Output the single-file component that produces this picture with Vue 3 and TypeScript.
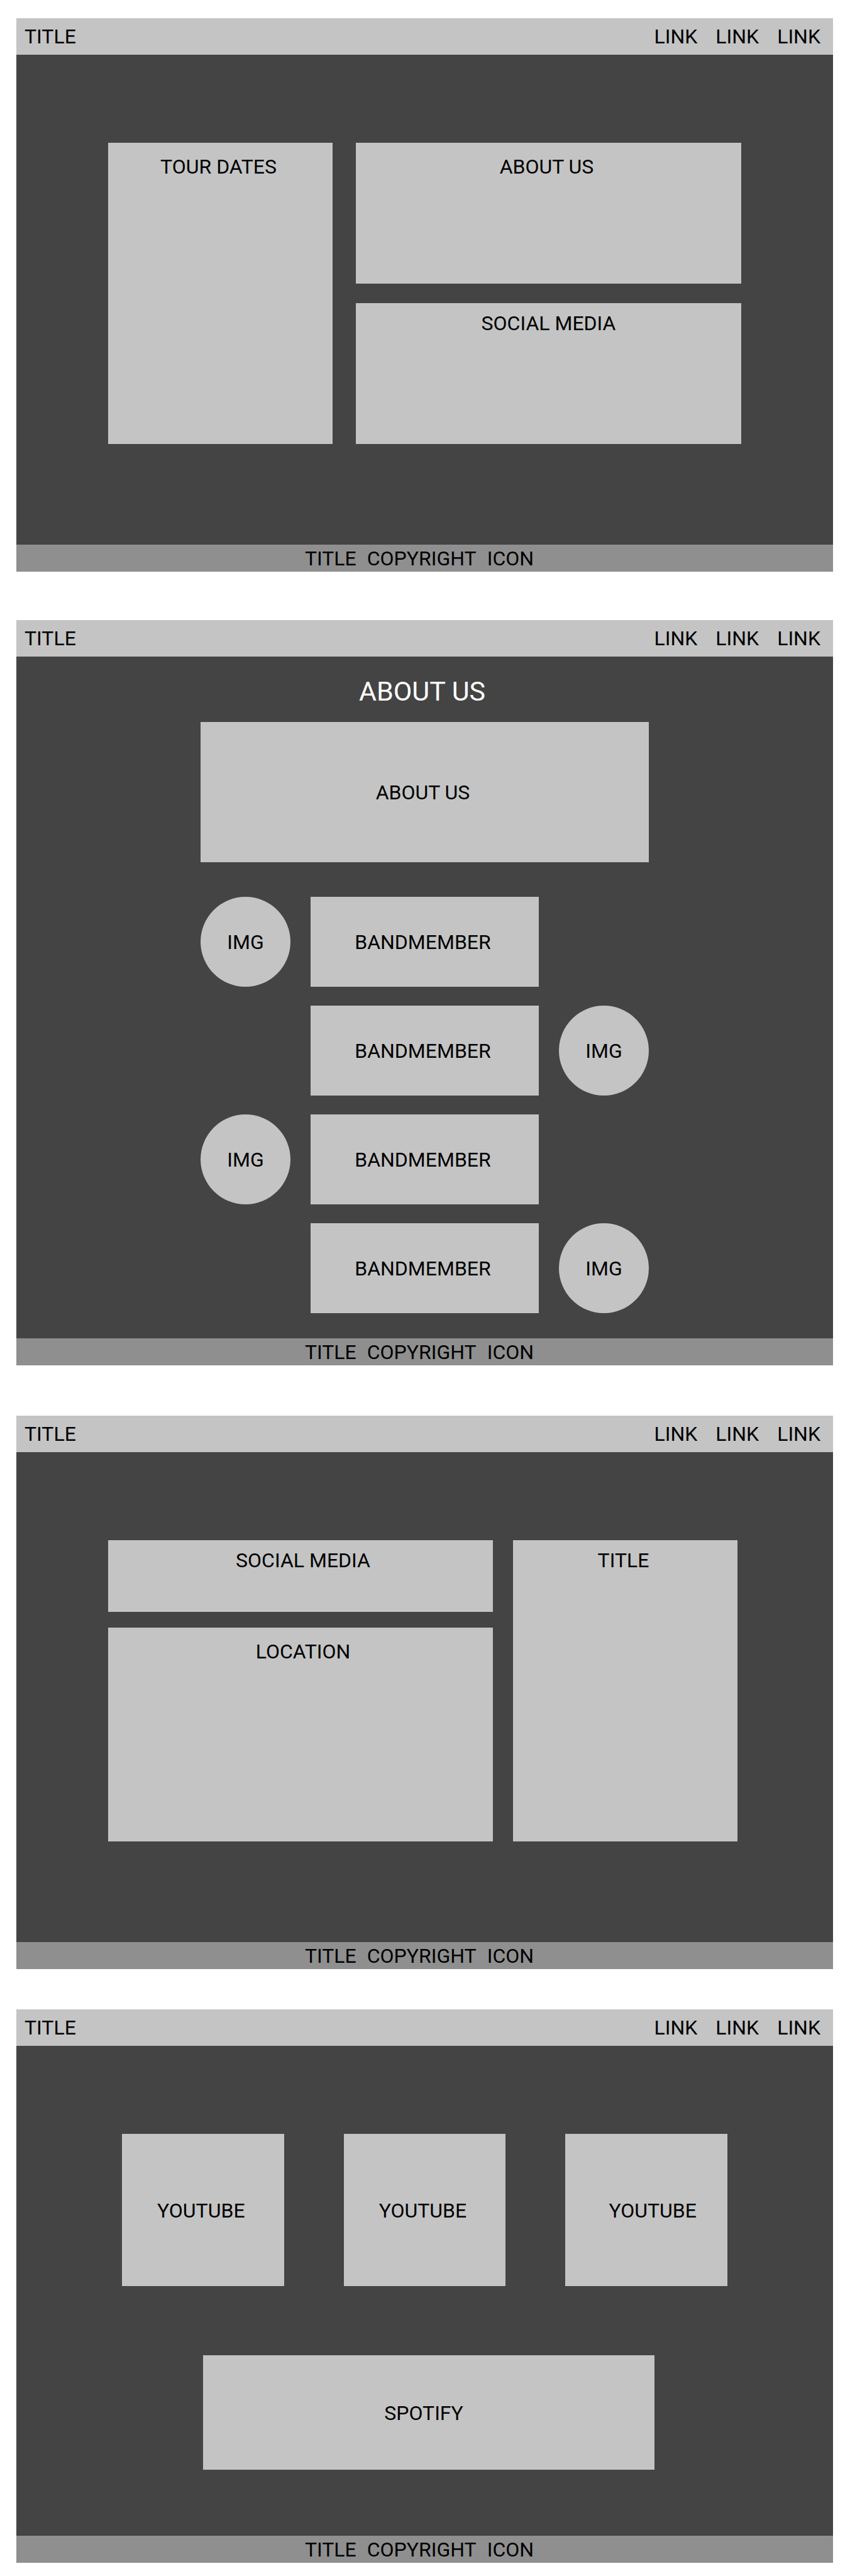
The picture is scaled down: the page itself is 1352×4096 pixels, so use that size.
<script setup lang="ts">
interface Member {
  id: number
  side: 'left' | 'right'
}

const links: string[] = ['LINK', 'LINK', 'LINK']
const footerItems: string[] = ['TITLE', 'COPYRIGHT', 'ICON']

const members: Member[] = [
  { id: 1, side: 'left' },
  { id: 2, side: 'right' },
  { id: 3, side: 'left' },
  { id: 4, side: 'right' },
]
</script>

<template>
  <div class="board">
    <!-- Home -->
    <section class="screen screen-home">
      <header class="bar">
        <span>TITLE</span>
        <nav class="links">
          <a v-for="(link, i) in links" :key="i" href="#">{{ link }}</a>
        </nav>
      </header>
      <main class="body home">
        <article class="card roomy">TOUR DATES</article>
        <div class="stack">
          <article class="card roomy">ABOUT US</article>
          <article class="card even">SOCIAL MEDIA</article>
        </div>
      </main>
      <footer class="foot">
        <span v-for="item in footerItems" :key="item">{{ item }}</span>
      </footer>
    </section>

    <!-- About -->
    <section class="screen screen-about">
      <header class="bar">
        <span>TITLE</span>
        <nav class="links">
          <a v-for="(link, i) in links" :key="i" href="#">{{ link }}</a>
        </nav>
      </header>
      <main class="body about">
        <h1 class="heading">ABOUT US</h1>
        <article class="card middle intro">ABOUT US</article>
        <ul class="members">
          <li v-for="member in members" :key="member.id" class="member" :class="member.side">
            <div class="avatar">IMG</div>
            <div class="card middle name">BANDMEMBER</div>
          </li>
        </ul>
      </main>
      <footer class="foot">
        <span v-for="item in footerItems" :key="item">{{ item }}</span>
      </footer>
    </section>

    <!-- Contact -->
    <section class="screen screen-contact">
      <header class="bar">
        <span>TITLE</span>
        <nav class="links">
          <a v-for="(link, i) in links" :key="i" href="#">{{ link }}</a>
        </nav>
      </header>
      <main class="body contact">
        <div class="stack">
          <article class="card lead">SOCIAL MEDIA</article>
          <article class="card roomy lead">LOCATION</article>
        </div>
        <article class="card">TITLE</article>
      </main>
      <footer class="foot">
        <span v-for="item in footerItems" :key="item">{{ item }}</span>
      </footer>
    </section>

    <!-- Media -->
    <section class="screen screen-media">
      <header class="bar">
        <span>TITLE</span>
        <nav class="links">
          <a v-for="(link, i) in links" :key="i" href="#">{{ link }}</a>
        </nav>
      </header>
      <main class="body media">
        <div class="videos">
          <article class="card middle">YOUTUBE</article>
          <article class="card middle">YOUTUBE</article>
          <article class="card middle lead-far">YOUTUBE</article>
        </div>
        <article class="card middle trail-far player">SPOTIFY</article>
      </main>
      <footer class="foot">
        <span v-for="item in footerItems" :key="item">{{ item }}</span>
      </footer>
    </section>
  </div>
</template>

<style>
body {
  background: #ffffff;
}
</style>

<style scoped>
.board,
.board * {
  box-sizing: border-box;
}

.board {
  padding: 29px 27px 21px 26px;
  background: #ffffff;
  color: #000000;
  font-family: Roboto, "Liberation Sans", sans-serif;
  font-size: 32px;
  line-height: 38px;
}

.screen {
  display: flex;
  flex-direction: column;
  background: #444444;
}

.screen-about {
  margin-top: 77px;
}

.screen-contact {
  margin-top: 80px;
}

.screen-media {
  margin-top: 64px;
}

.bar {
  display: flex;
  align-items: center;
  justify-content: space-between;
  padding: 10px 20px 10px 13px;
  background: #c4c4c4;
}

.links {
  display: flex;
  gap: 29px;
}

.links a {
  color: inherit;
  text-decoration: none;
}

.foot {
  display: flex;
  justify-content: center;
  padding: 3px 0 2px;
  background: #8f8f8f;
}

.foot span {
  padding-right: 17px;
}

.card {
  padding: 13px 6px 13px 0;
  background: #c4c4c4;
  text-align: center;
}

.roomy {
  padding-top: 19px;
}

.even {
  padding-right: 0;
}

.lead {
  padding-right: 0;
  padding-left: 8px;
}

.middle {
  display: flex;
  align-items: center;
  justify-content: center;
  padding: 1px 6px 0 0;
}

.lead-far {
  padding-right: 0;
  padding-left: 20px;
}

.trail-far {
  padding-right: 16px;
}

.stack {
  display: grid;
}

/* Home */
.home {
  display: grid;
  grid-template-columns: 357fr 613fr;
  gap: 37px;
  padding: 140px 146px 160px;
}

.home .stack {
  grid-auto-rows: 224px;
  gap: 31px;
}

/* About */
.about {
  padding: 29px 293px 40px;
}

.heading {
  margin: 0 0 23px;
  padding-right: 8px;
  color: #ffffff;
  font-size: 43px;
  font-weight: 400;
  line-height: 52px;
  text-align: center;
}

.intro {
  min-height: 223px;
}

.members {
  display: grid;
  gap: 30px;
  margin: 55px 0 0;
  padding: 0;
  list-style: none;
}

.member {
  display: grid;
  grid-template-columns: 143px 1fr 143px;
  column-gap: 32px;
}

.avatar {
  display: flex;
  grid-row: 1;
  align-items: center;
  justify-content: center;
  height: 143px;
  padding-top: 1px;
  border-radius: 50%;
  background: #c4c4c4;
}

.name {
  grid-row: 1;
  grid-column: 2;
}

.left .avatar {
  grid-column: 1;
}

.right .avatar {
  grid-column: 3;
}

/* Contact */
.contact {
  display: grid;
  grid-template-columns: 612fr 357fr;
  gap: 32px;
  padding: 140px 152px 160px 146px;
}

.contact .stack {
  grid-template-rows: 114px 340px;
  gap: 25px;
}

/* Media */
.media {
  padding: 140px 168px 105px;
}

.videos {
  display: grid;
  grid-template-columns: repeat(3, 1fr);
  grid-auto-rows: 242px;
  gap: 95px;
}

.player {
  min-height: 182px;
  margin: 110px 116px 0 129px;
}

@media (max-width: 1000px) {
  .home,
  .about,
  .contact,
  .media {
    padding-right: 32px;
    padding-left: 32px;
  }

  .videos {
    gap: 32px;
  }

  .player {
    margin-right: 0;
    margin-left: 0;
  }
}
</style>
